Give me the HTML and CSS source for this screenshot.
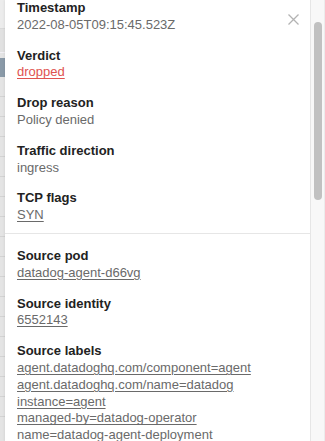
FILE: index.html
```html
<!DOCTYPE html>
<html lang="en">
<head>
<meta charset="utf-8">
<title>Flow details</title>
<link rel="stylesheet" href="styles.css">
</head>
<body>
<div class="page">
  <div class="table-strip">
    <div class="row head"></div>
    <div class="row sub"></div>
    <div class="row gap"></div>
    <div class="row selected"></div>
    <div class="row"></div>
    <div class="row"></div>
    <div class="row"></div>
    <div class="row"></div>
    <div class="row"></div>
    <div class="row"></div>
    <div class="row"></div>
    <div class="row"></div>
    <div class="row"></div>
    <div class="row"></div>
    <div class="row"></div>
    <div class="row"></div>
    <div class="row"></div>
    <div class="row"></div>
    <div class="row"></div>
    <div class="row"></div>
    <div class="row"></div>
  </div>
  <aside class="panel">
    <div class="panel-body">
      <button class="close" aria-label="Close">
        <svg width="11" height="11" viewBox="0 0 11 11"><path d="M0.5 0.5 L10.5 10.5 M10.5 0.5 L0.5 10.5" stroke="#b3b3b3" stroke-width="1.3" fill="none"/></svg>
      </button>
      <section class="section first">
        <div class="field">
          <div class="label">Timestamp</div>
          <div class="value">2022-08-05T09:15:45.523Z</div>
        </div>
        <div class="field">
          <div class="label">Verdict</div>
          <div class="value"><a class="link danger" href="#">dropped</a></div>
        </div>
        <div class="field">
          <div class="label">Drop reason</div>
          <div class="value">Policy denied</div>
        </div>
        <div class="field">
          <div class="label">Traffic direction</div>
          <div class="value">ingress</div>
        </div>
        <div class="field">
          <div class="label">TCP flags</div>
          <div class="value"><a class="link" href="#">SYN</a></div>
        </div>
      </section>
      <section class="section">
        <div class="field">
          <div class="label">Source pod</div>
          <div class="value"><a class="link" href="#">datadog-agent-d66vg</a></div>
        </div>
        <div class="field">
          <div class="label">Source identity</div>
          <div class="value"><a class="link" href="#">6552143</a></div>
        </div>
        <div class="field">
          <div class="label">Source labels</div>
          <div class="value"><a class="link" href="#">agent.datadoghq.com/component=agent</a></div>
          <div class="value"><a class="link" href="#">agent.datadoghq.com/name=datadog</a></div>
          <div class="value"><a class="link" href="#">instance=agent</a></div>
          <div class="value"><a class="link" href="#">managed-by=datadog-operator</a></div>
          <div class="value"><a class="link" href="#">name=datadog-agent-deployment</a></div>
        </div>
      </section>
    </div>
    <div class="scrollbar">
      <div class="thumb"></div>
    </div>
  </aside>
</div>
</body>
</html>
```

FILE: styles.css
```css
html, body {
  margin: 0;
  padding: 0;
  height: 100%;
  overflow: hidden;
}

body {
  font-family: "Liberation Sans", Arial, sans-serif;
  font-size: 13px;
  background: #e4e4e4;
}

.page {
  display: flex;
  height: 441px;
  overflow: hidden;
}

.table-strip {
  width: 5px;
  flex: none;
  display: flex;
  flex-direction: column;
  background: #e4e4e4;
}

.row {
  height: 19px;
  flex: none;
  border-bottom: 1px solid #d3d3d3;
}

.row.head {
  height: 28px;
  background: #ececec;
  border-bottom: 1px solid #d9d9d9;
}

.row.sub {
  height: 23px;
  background: #e1e1e1;
  border-bottom: 1px solid #f2f0f5;
}

.row.gap {
  height: 5px;
  border-bottom: none;
}

.row.selected {
  height: 19px;
  background: #8a9aa8;
  border-bottom: none;
}

.panel {
  flex: 1;
  display: flex;
  background: #ffffff;
  box-shadow: -1px 0 2px rgba(0, 0, 0, 0.06);
}

.panel-body {
  position: relative;
  flex: 1;
  overflow: hidden;
}

.close {
  position: absolute;
  top: 14px;
  right: 11px;
  width: 11px;
  height: 11px;
  padding: 0;
  border: none;
  background: none;
  display: flex;
}

.section {
  padding: 14px 12px 9px 12px;
  border-bottom: 1px solid #e6e6e6;
}

.section.first {
  margin-top: -14px;
}

.field {
  margin-bottom: 14px;
}

.field:last-child {
  margin-bottom: 0;
}

.label {
  font-weight: bold;
  color: #222222;
  line-height: 16.8px;
  white-space: nowrap;
}

.value {
  color: #6a6a6a;
  line-height: 16.8px;
  white-space: nowrap;
}

.link {
  color: #6a6a6a;
  text-decoration: underline;
  text-decoration-thickness: 1px;
  text-underline-offset: 2px;
}

.link.danger {
  color: #e0524f;
}

.scrollbar {
  width: 13px;
  flex: none;
  background: #f8f8f8;
  border-left: 1px solid #e6e6e6;
  border-right: 1px solid #ececec;
  display: flex;
  justify-content: center;
}

.thumb {
  width: 8px;
  height: 178px;
  margin-top: 22px;
  border-radius: 4px;
  background: #c1c1c1;
}
```
